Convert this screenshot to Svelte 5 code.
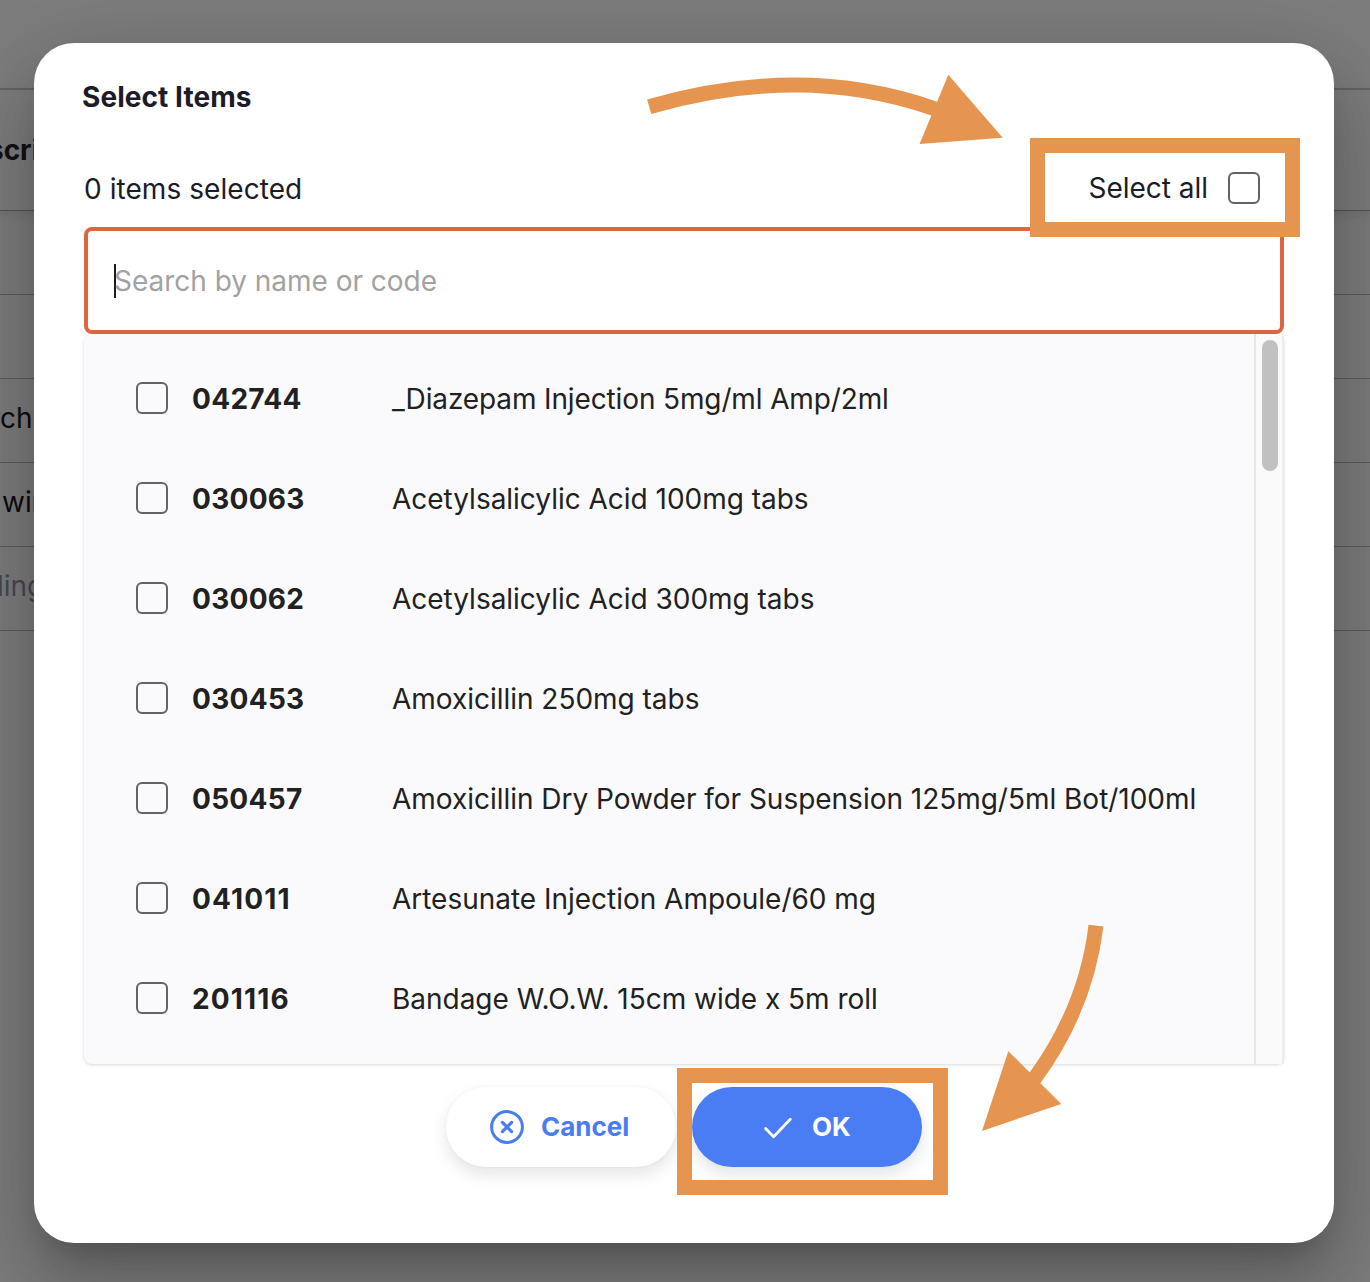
<script>
  const items = [
    { code: '042744', name: '_Diazepam Injection 5mg/ml Amp/2ml' },
    { code: '030063', name: 'Acetylsalicylic Acid 100mg tabs' },
    { code: '030062', name: 'Acetylsalicylic Acid 300mg tabs' },
    { code: '030453', name: 'Amoxicillin 250mg tabs' },
    { code: '050457', name: 'Amoxicillin Dry Powder for Suspension 125mg/5ml Bot/100ml' },
    { code: '041011', name: 'Artesunate Injection Ampoule/60 mg' },
    { code: '201116', name: 'Bandage W.O.W. 15cm wide x 5m roll' },
  ];
</script>

<div class="screen">
  <!-- Dimmed table behind the dialog -->
  <div class="page">
    <div class="toolbar"></div>
    <div class="head"><span>scri</span></div>
    <div class="line"></div>
    <div class="line"></div>
    <div class="line"><span class="cut">rch</span></div>
    <div class="line"><span class="whole">win</span></div>
    <div class="line muted"><span class="edge">ling</span></div>
  </div>

  <div class="layer">
    <div class="dialog" role="dialog" aria-label="Select Items">
      <h1>Select Items</h1>
      <div class="summary">
        <span class="count">0 items selected</span>
        <span class="all">Select all</span>
        <span class="box"></span>
      </div>
      <div class="search"><span class="caret"></span><span>Search by name or code</span></div>
      <div class="list">
        <div class="rows">
          {#each items as item}
            <div class="row">
              <span class="box"></span>
              <span class="code" class:loose={item.code.includes('11')}>{item.code}</span>
              <span class="name" class:tight={item.name.startsWith('_')}>{item.name}</span>
            </div>
          {/each}
        </div>
        <div class="track"><div class="thumb"></div></div>
      </div>
      <div class="actions">
        <div class="btn cancel">
          <svg width="36" height="36" viewBox="0 0 36 36" fill="none" stroke="currentColor" stroke-linecap="round">
            <circle cx="18" cy="18" r="15.4" stroke-width="3" />
            <path d="M13.4 13.4l9.2 9.2M22.6 13.4l-9.2 9.2" stroke-width="3.2" />
          </svg>
          <span>Cancel</span>
        </div>
        <div class="btn ok">
          <svg width="32" height="32" viewBox="0 0 32 32" fill="none" stroke="currentColor" stroke-linecap="round" stroke-linejoin="round">
            <path d="M3.6 17.5l8 8.2L28.3 8.2" stroke-width="2.8" />
          </svg>
          <span>OK</span>
        </div>
      </div>
    </div>
  </div>

  <!-- Tutorial annotations -->
  <div class="mark mark-all"></div>
  <div class="mark mark-ok"></div>
  <svg class="arrows" width="1370" height="1282" viewBox="0 0 1370 1282">
    <g fill="none" stroke="#e5954f" stroke-width="15">
      <path d="M649.2 106.8Q802 62.5 933.8 108.5l8 3.2" />
      <path d="M1096 925.6Q1086 1008 1035 1077.8l-6 7" />
    </g>
    <g fill="#e5954f">
      <path d="M948.3 74.7L1002.7 137.8L919.5 143.9Z" />
      <path d="M1008.3 1051.2L1061.2 1103.9L982 1130.9Z" />
    </g>
  </svg>
</div>

<style>
  :global(body) { margin: 0; }
  .screen {
    position: relative;
    width: 1370px;
    height: 1282px;
    overflow: hidden;
    display: grid;
    background: #7d7d7e;
    font: 400 28px/34px Inter, sans-serif;
    letter-spacing: -0.02px;
    color: #1c1c28;
  }
  .screen * { box-sizing: border-box; }
  .page, .layer { grid-area: 1 / 1; min-width: 0; }
  .toolbar { height: 90px; border-bottom: 2px solid #666668; }
  .head {
    height: 121px;
    border-bottom: 1px solid #53535c;
    display: flex;
    align-items: center;
    font-weight: 700;
    color: #111;
    box-shadow: 0 4px 10px rgba(0, 0, 0, 0.09);
  }
  .head span { margin-left: -12px; }
  .line {
    height: 84px;
    padding-bottom: 5px;
    border-bottom: 1px solid #5a5a62;
    display: flex;
    align-items: center;
    color: #0c0c0e;
  }
  .cut { margin-left: -10px; }
  .whole { margin-left: 2px; }
  .edge { margin-left: -3px; }
  .muted { color: #484852; }
  .layer { position: relative; padding: 43px 36px 39px 34px; }
  .dialog {
    height: 1200px;
    padding: 37px 50px 0;
    border-radius: 40px;
    background: #fff;
    box-shadow: 0 22px 30px -14px rgba(0, 0, 0, 0.2), 0 48px 76px 6px rgba(0, 0, 0, 0.14),
      0 18px 92px 16px rgba(0, 0, 0, 0.12);
  }
  h1 { margin: 0 0 0 -2px; font-size: 28px; line-height: 34px; font-weight: 700; letter-spacing: 0.06px; }
  .summary { height: 113px; padding: 34px 24px 0 0; display: flex; align-items: center; }
  .count { flex: 1; padding-top: 2px; letter-spacing: 0.06px; }
  .all { margin-right: 20px; }
  .box { width: 32px; height: 32px; flex: none; border: 2px solid #636366; border-radius: 6px; }
  .search {
    height: 107px;
    border: 4px solid #dd6540;
    border-radius: 8px;
    padding-left: 26px;
    display: flex;
    align-items: center;
    color: #a2a2a2;
  }
  .caret { width: 2px; height: 34px; margin-right: -2px; background: #1c1c1c; }
  .list {
    height: 730px;
    display: flex;
    background: #fafafc;
    border-radius: 8px;
    box-shadow: 0 1px 3px rgba(40, 41, 61, 0.18);
  }
  .rows { flex: 1; padding: 14px 0 0 52px; color: #212121; }
  .row { height: 100px; display: flex; align-items: center; }
  .code { width: 200px; margin-left: 24px; padding-top: 2px; font-weight: 700; letter-spacing: 0.28px; }
  .loose { letter-spacing: 1.15px; }
  .name { padding-top: 2px; white-space: nowrap; }
  .tight { letter-spacing: -0.13px; }
  .track {
    width: 30px;
    padding: 6px 0 0 6px;
    background: #fafafa;
    border-left: 2px solid #e7e7e7;
    border-right: 2px solid #ededed;
  }
  .thumb { width: 16px; height: 131px; border-radius: 8px; background: #c1c1c1; }
  .actions { display: flex; justify-content: center; gap: 16px; padding-top: 23px; }
  .btn {
    width: 230px;
    height: 80px;
    border-radius: 40px;
    display: flex;
    align-items: center;
    font-size: 26px;
    font-weight: 700;
    letter-spacing: 0;
    box-shadow: 0 8px 16px rgba(96, 97, 112, 0.16), 0 0 4px rgba(40, 41, 61, 0.04);
  }
  .cancel { background: #fff; color: #4a7df3; padding-left: 43px; }
  .cancel span { margin-left: 16px; }
  .ok { background: #4a7df3; color: #fff; padding-left: 70px; }
  .ok span { margin-left: 18px; }
  .mark { position: absolute; border: 15px solid #e5954f; }
  .mark-all { left: 1030px; top: 138px; width: 270px; height: 99px; }
  .mark-ok { left: 677px; top: 1068px; width: 271px; height: 127px; }
  .arrows { position: absolute; left: 0; top: 0; }
</style>
